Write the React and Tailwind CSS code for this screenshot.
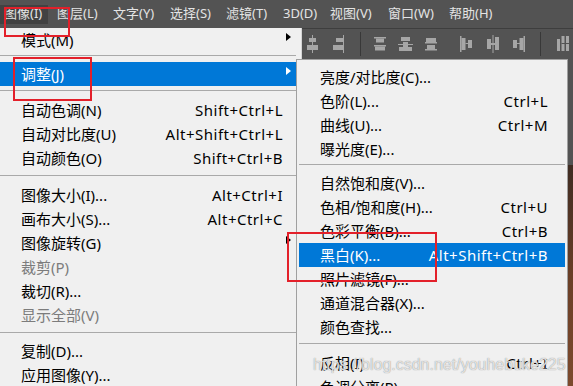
import React from 'react';

const barItems = [
  { label: '图层(L)', w: 'w-[56px]' },
  { label: '文字(Y)', w: 'w-[57px]' },
  { label: '选择(S)', w: 'w-[56px]' },
  { label: '滤镜(T)', w: 'w-[57px]' },
  { label: '3D(D)', w: 'w-[47px]' },
  { label: '视图(V)', w: 'w-[58px]' },
  { label: '窗口(W)', w: 'w-[61px]' },
  { label: '帮助(H)', w: 'w-[60px]' },
];

const mainItems = [
  { label: '模式(M)', arrow: true },
  { sep: 'h-[10px] pt-[3px]' },
  { label: '调整(J)', arrow: true, active: true },
  { sep: 'h-[12px] pt-[4px]' },
  { label: '自动色调(N)', sc: 'Shift+Ctrl+L' },
  { label: '自动对比度(U)', sc: 'Alt+Shift+Ctrl+L' },
  { label: '自动颜色(O)', sc: 'Shift+Ctrl+B' },
  { sep: 'h-[13px] pt-[5px]' },
  { label: '图像大小(I)...', sc: 'Alt+Ctrl+I' },
  { label: '画布大小(S)...', sc: 'Alt+Ctrl+C' },
  { label: '图像旋转(G)', arrow: true },
  { label: '裁剪(P)', disabled: true },
  { label: '裁切(R)...' },
  { label: '显示全部(V)', disabled: true },
  { sep: 'h-[12px] pt-[5px]' },
  { label: '复制(D)...' },
  { label: '应用图像(Y)...' },
  { label: '计算(C)...' },
];

const subItems = [
  { label: '亮度/对比度(C)...' },
  { label: '色阶(L)...', sc: 'Ctrl+L' },
  { label: '曲线(U)...', sc: 'Ctrl+M' },
  { label: '曝光度(E)...' },
  { sep: 'h-[10px] pt-[3px]' },
  { label: '自然饱和度(V)...' },
  { label: '色相/饱和度(H)...', sc: 'Ctrl+U' },
  { label: '色彩平衡(B)...', sc: 'Ctrl+B' },
  { label: '黑白(K)...', sc: 'Alt+Shift+Ctrl+B', active: true },
  { label: '照片滤镜(F)...' },
  { label: '通道混合器(X)...' },
  { label: '颜色查找...' },
  { sep: 'h-[12px] pt-[4px]' },
  { label: '反相(I)', sc: 'Ctrl+I' },
  { label: '色调分离(P)...' },
];

const Arrow = ({ white }) => (
  <span
    className={
      'mb-[6px] ml-[3px] h-0 w-0 border-y-[4px] border-l-[5px] border-y-transparent ' +
      (white ? 'border-l-white' : 'border-l-black')
    }
  />
);

const MenuRow = ({ item, trail }) => {
  if (item.sep) {
    return (
      <div className={item.sep}>
        <div className="h-px bg-[#a9a9a9]" />
      </div>
    );
  }
  const color = item.active ? 'bg-[#0078d7] text-white' : item.disabled ? 'text-[#7c7c7c]' : 'text-black';
  return (
    <div className={'flex h-[24px] items-center pl-[21px] ' + color}>
      <span className="flex-1 whitespace-nowrap">{item.label}</span>
      {item.sc && <span className="whitespace-nowrap tracking-[0.5px]">{item.sc}</span>}
      <span className={'flex h-full shrink-0 items-center ' + trail}>
        {item.arrow && <Arrow white={item.active} />}
      </span>
    </div>
  );
};

// tiny grey alignment glyphs in the options bar
const ToolIcon = ({ kind }) => {
  const shapes = {
    hc: (
      <>
        <rect x="5" y="0" width="1" height="18" />
        <rect x="2" y="3" width="7" height="4" />
        <rect x="0" y="10" width="11" height="5" />
      </>
    ),
    r: (
      <>
        <rect x="10" y="0" width="1.5" height="18" />
        <rect x="3" y="3" width="7" height="4" />
        <rect x="0" y="10" width="10" height="5" />
      </>
    ),
    t: (
      <>
        <rect x="0" y="2" width="12" height="1.5" />
        <rect x="2" y="3.5" width="8" height="4" />
        <rect x="0" y="10" width="12" height="1.5" />
        <rect x="1" y="11.5" width="10" height="4" />
      </>
    ),
    vc: (
      <>
        <rect x="0" y="9" width="15" height="1" />
        <rect x="3" y="2" width="9" height="4" />
        <rect x="1" y="12" width="13" height="4" />
        <rect x="5" y="7" width="5" height="5" />
      </>
    ),
    b: (
      <>
        <rect x="1" y="3" width="10" height="4" />
        <rect x="0" y="7" width="12" height="1.5" />
        <rect x="2" y="10" width="8" height="4" />
        <rect x="0" y="14" width="12" height="1.5" />
      </>
    ),
    l: (
      <>
        <rect x="0" y="1" width="1.5" height="16" />
        <rect x="1.5" y="3" width="4" height="12" />
        <rect x="8" y="5" width="4" height="8" />
        <rect x="5.5" y="8" width="3" height="1" />
      </>
    ),
    c: (
      <>
        <rect x="5.5" y="0" width="1" height="18" />
        <rect x="0" y="4" width="4" height="10" />
        <rect x="8" y="2" width="4" height="13" />
        <rect x="4" y="8" width="4" height="2" />
      </>
    ),
    rr: (
      <>
        <rect x="10.5" y="1" width="1.5" height="16" />
        <rect x="6.5" y="3" width="4" height="12" />
        <rect x="0" y="5" width="4" height="8" />
        <rect x="4" y="8" width="3" height="1" />
      </>
    ),
    d: (
      <>
        <rect x="0" y="4" width="3" height="12" />
        <rect x="4.5" y="1" width="3" height="15" />
        <rect x="9" y="1" width="3" height="15" />
        <rect x="4.5" y="8" width="7.5" height="1" fill="#535353" />
      </>
    ),
  };
  const w = kind === 'vc' ? 15 : kind === 'hc' || kind === 'r' ? 11 : 12;
  return (
    <svg width={w} height="18" viewBox={`0 0 ${w} 18`} fill="#a6a6a6">
      {shapes[kind]}
    </svg>
  );
};

const toolbar = [
  { kind: 'hc', ml: 'ml-[5px]' },
  { kind: 'r', ml: 'ml-[15px]' },
  { sep: true, ml: 'ml-[16px]' },
  { kind: 't', ml: 'ml-[13px]' },
  { kind: 'vc', ml: 'ml-[12px]' },
  { kind: 'b', ml: 'ml-[12px]' },
  { kind: 'l', ml: 'ml-[23px]' },
  { kind: 'c', ml: 'ml-[15px]' },
  { kind: 'rr', ml: 'ml-[14px]' },
  { sep: true, ml: 'ml-[15px]' },
  { kind: 'd', ml: 'ml-[16px]' },
];

export default function App() {
  return (
    <div className="relative h-[386px] w-[573px] overflow-hidden bg-[#535353] font-[family-name:'Noto_Sans','Noto_Sans_CJK_SC',sans-serif]">
      {/* menu bar */}
      <div className="flex h-[28px] items-center text-[13px] text-[#e4e4e4]">
        <div className="w-[57px]">
          <div className="flex h-[19px] w-[48px] items-center bg-[#424242] pl-[4px]">图像(I)</div>
        </div>
        {barItems.map((b) => (
          <div key={b.label} className={'shrink-0 whitespace-nowrap ' + b.w}>
            {b.label}
          </div>
        ))}
      </div>

      <div className="flex">
        {/* image menu */}
        <div className="w-[302px] shrink-0 border-r border-[#d4d4d4] bg-[#f0f0f0] pr-[5px] text-[15px]">
          {mainItems.map((it, i) => (
            <MenuRow key={i} item={it} trail="w-[13px]" />
          ))}
        </div>

        {/* options bar + canvas */}
        <div className="flex h-[358px] flex-1 flex-col">
          <div className="flex h-[31px] items-center border-t border-[#3e3e3e]">
            {toolbar.map((t, i) =>
              t.sep ? (
                <div key={i} className={'h-[24px] w-px bg-[#383838] ' + t.ml} />
              ) : (
                <div key={i} className={'flex ' + t.ml}>
                  <ToolIcon kind={t.kind} />
                </div>
              )
            )}
          </div>
          <div className="h-[106px]" />
          <div className="flex-1 bg-gradient-to-b from-[#3f2c22] via-[#6a3f27] to-[#7d4a2d]" />
        </div>
      </div>

      {/* adjustments submenu */}
      <div className="absolute left-[296px] top-[59px] w-[272px] border border-[#a0a0a0] bg-[#f0f0f0] p-[2px] pt-[5px] text-[15px]">
        {subItems.map((it, i) => (
          <MenuRow key={i} item={it} trail="w-[17px]" />
        ))}
      </div>

      {/* blog watermark */}
      <div className="pointer-events-none absolute left-[313px] top-[353px] whitespace-nowrap font-['Liberation_Sans',sans-serif] text-[16px] text-white/75 [text-shadow:0_0_1px_#777]">
        https://blog.csdn.net/youhebuke225
      </div>

      {/* red annotation boxes */}
      <div className="pointer-events-none absolute left-[4px] top-[7px] h-[30px] w-[66px] border-2 border-[#e3202a]" />
      <div className="pointer-events-none absolute left-[13px] top-[57px] h-[44px] w-[79px] border-2 border-[#e3202a]" />
      <div className="pointer-events-none absolute left-[287px] top-[232px] h-[50px] w-[150px] border-2 border-[#e3202a]" />
    </div>
  );
}
